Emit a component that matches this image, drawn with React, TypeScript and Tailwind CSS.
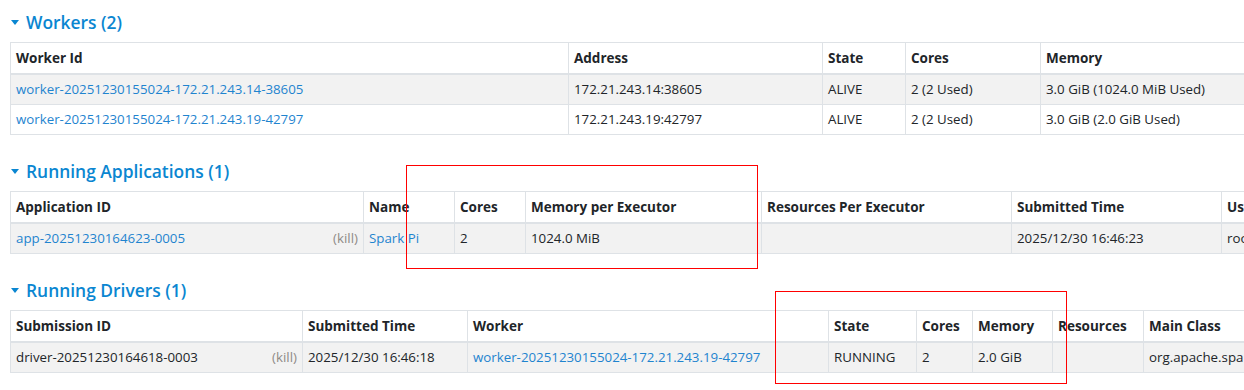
import type { ReactNode } from "react";

type Cell = ReactNode;

function SectionHeader({ title }: { title: string }) {
  return (
    <div className="h-[26px] mb-[7px] flex items-center pl-[11px]">
      <span className="w-0 h-0 border-l-[4px] border-r-[4px] border-t-[5px] border-l-transparent border-r-transparent border-t-[#0a86d1] mr-[7px]" />
      <span className="text-[17.4px] font-semibold text-[#0a86d1] leading-[26px]">{title}</span>
    </div>
  );
}

function DataTable({ cols, headers, rows }: { cols: string; headers: string[]; rows: Cell[][] }) {
  return (
    <div className={`grid w-max ml-[10px] mb-[23px] border-l border-t border-[#dee2e6] ${cols}`}>
      {headers.map((h, i) => (
        <div
          key={"h" + i}
          className="px-[5px] py-[4px] text-[13.5px] leading-[22px] font-bold text-[#212529] border-r border-b-2 border-[#dee2e6] whitespace-nowrap overflow-hidden"
        >
          {h}
        </div>
      ))}
      {rows.map((row, r) =>
        row.map((c, i) => (
          <div
            key={r + "-" + i}
            className={
              "px-[5px] py-[4px] leading-[21px] text-[#212529] border-r border-b border-[#dee2e6] whitespace-nowrap overflow-hidden " +
              (r % 2 === 0 ? "bg-[#f2f2f2]" : "bg-white")
            }
          >
            {c}
          </div>
        ))
      )}
    </div>
  );
}

const Lnk = ({ children }: { children: ReactNode }) => <span className="text-[#1f84cf]">{children}</span>;

function WithKill({ children, link }: { children: ReactNode; link?: boolean }) {
  return (
    <div className="flex justify-between">
      {link ? <Lnk>{children}</Lnk> : <span>{children}</span>}
      <span className="text-[#8f8a86]">(kill)</span>
    </div>
  );
}

export default function App() {
  return (
    <div
      className="relative w-[1244px] h-[390px] overflow-hidden bg-white pt-[9px] text-[13.3px]"
      style={{ fontFamily: '"Open Sans", "Noto Sans", sans-serif' }}
    >
      <SectionHeader title="Workers (2)" />
      <DataTable
        cols="grid-cols-[558px_254px_83px_135px_250px]"
        headers={["Worker Id", "Address", "State", "Cores", "Memory"]}
        rows={[
          [<Lnk>worker-20251230155024-172.21.243.14-38605</Lnk>, "172.21.243.14:38605", "ALIVE", "2 (2 Used)", "3.0 GiB (1024.0 MiB Used)"],
          [<Lnk>worker-20251230155024-172.21.243.19-42797</Lnk>, "172.21.243.19:42797", "ALIVE", "2 (2 Used)", "3.0 GiB (2.0 GiB Used)"],
        ]}
      />

      <SectionHeader title="Running Applications (1)" />
      <DataTable
        cols="grid-cols-[353px_91px_71px_236px_250px_210px_120px]"
        headers={["Application ID", "Name", "Cores", "Memory per Executor", "Resources Per Executor", "Submitted Time", "User"]}
        rows={[
          [
            <WithKill link>app-20251230164623-0005</WithKill>,
            <Lnk>Spark Pi</Lnk>,
            "2",
            "1024.0 MiB",
            "",
            "2025/12/30 16:46:23",
            "root",
          ],
        ]}
      />

      <SectionHeader title="Running Drivers (1)" />
      <DataTable
        cols="grid-cols-[292px_165px_361px_88px_56px_80px_91px_200px]"
        headers={["Submission ID", "Submitted Time", "Worker", "State", "Cores", "Memory", "Resources", "Main Class"]}
        rows={[
          [
            <WithKill>driver-20251230164618-0003</WithKill>,
            "2025/12/30 16:46:18",
            <Lnk>worker-20251230155024-172.21.243.19-42797</Lnk>,
            "RUNNING",
            "2",
            "2.0 GiB",
            "",
            "org.apache.spark.examples.SparkPi",
          ],
        ]}
      />

      {/* annotation boxes */}
      <div className="absolute left-[406px] top-[165px] w-[352px] h-[104px] border border-[#ff0000] pointer-events-none" />
      <div className="absolute left-[775px] top-[291px] w-[292px] h-[93px] border border-[#ff0000] pointer-events-none" />
    </div>
  );
}
